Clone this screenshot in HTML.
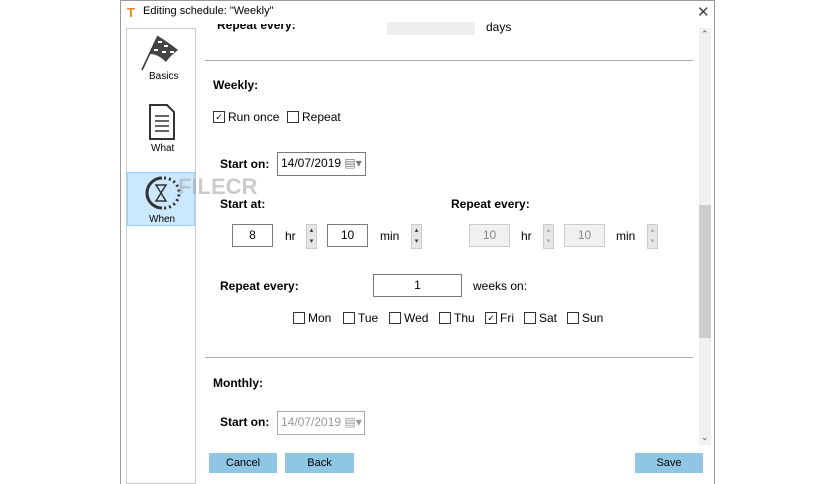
<!DOCTYPE html>
<html><head><style>
body{margin:0;width:836px;height:484px;background:#fff;position:relative;overflow:hidden;font-family:"Liberation Sans",sans-serif;font-size:12px;color:#000}
.a{position:absolute}
.b{font-weight:bold}
.inp{position:absolute;border:1px solid #7a7a7a;background:#fff;text-align:center;box-sizing:border-box;line-height:21px}
.dis{border-color:#ccc;background:#f0f0f0;color:#888}
.sp{position:absolute;width:11px;height:25px;background:#e6e6e6;border:1px solid #ccc;box-sizing:border-box;font-size:7px;line-height:11px;text-align:center;color:#333}
.cb{display:inline-block;width:10px;height:10px;border:1px solid #333;vertical-align:middle;margin-right:3px;font-size:9px;line-height:10px;text-align:center;overflow:hidden;position:relative;top:-1px}
.btn{position:absolute;background:#8fc6e3;height:20px;line-height:20px;text-align:center;font-size:11px}
</style></head><body>
<div class="a" style="left:120px;top:0;width:595px;height:484px;border:1px solid #9a9a9a;border-bottom:none;box-sizing:border-box"></div>
<div class="a" style="left:127px;top:5px;color:#e88a1a;font-weight:bold;font-size:13px">T</div>
<div class="a" style="left:143px;top:5px;font-size:11px">Editing schedule: "Weekly"</div>
<div class="a" style="left:697px;top:3px;font-size:15px;color:#444">✕</div>
<div class="a" style="left:126px;top:28px;width:70px;height:456px;border:1px solid #ccc;box-sizing:border-box"></div>
<svg class="a" style="left:140px;top:32px" width="42" height="40"><path d="M2 38 L18 4" stroke="#333" stroke-width="1.5"/><path d="M18 4 Q28 10 38 18 Q30 24 26 30 Q18 22 10 22 Z" fill="#444"/><path d="M18 10h4M24 14h4M14 18h4M22 20h4M30 20h4" stroke="#fff" stroke-width="2"/></svg>
<div class="a" style="left:149px;top:71px;font-size:10px">Basics</div>
<svg class="a" style="left:148px;top:103px" width="28" height="38"><path d="M2 2h17l7 7v27H2z" fill="#fff" stroke="#333" stroke-width="2"/><path d="M7 13h14M7 18h14M7 23h14M7 28h14" stroke="#333" stroke-width="1.5"/></svg>
<div class="a" style="left:151px;top:143px;font-size:10px">What</div>
<div class="a" style="left:127px;top:172px;width:68px;height:54px;background:#cce8ff;border:1px solid #99d1ff;box-sizing:border-box"></div>
<svg class="a" style="left:142px;top:174px" width="40" height="38"><path d="M20 4 A15 15 0 1 0 20 34" fill="none" stroke="#333" stroke-width="3"/><path d="M22 4 A15 15 0 0 1 22 34" fill="none" stroke="#333" stroke-width="3" stroke-dasharray="2 3"/><path d="M14 11h10l-5 8 5 8H14l5-8z" fill="none" stroke="#333" stroke-width="1.5"/></svg>
<div class="a" style="left:149px;top:214px;font-size:10px">When</div>
<div class="a" style="left:178px;top:174px;font-size:22px;font-weight:bold;color:#aaa;opacity:.6">FILECR</div>
<div class="a b" style="left:217px;top:18px;clip-path:inset(6px 0 0 0)">Repeat every:</div>
<div class="a" style="left:387px;top:22px;width:88px;height:13px;background:#eee"></div>
<div class="a" style="left:486px;top:20px">days</div>
<div class="a" style="left:205px;top:60px;width:488px;height:1px;background:#aaa"></div>
<div class="a b" style="left:213px;top:78px">Weekly:</div>
<div class="a" style="left:213px;top:110px"><span class="cb">✓</span>Run once</div>
<div class="a" style="left:287px;top:110px"><span class="cb"></span>Repeat</div>
<div class="a b" style="left:220px;top:157px">Start on:</div>
<div class="inp" style="left:277px;top:152px;width:89px;height:24px;text-align:left;padding-left:3px">14/07/2019 <span style="color:#777">▤▾</span></div>
<div class="a b" style="left:220px;top:197px">Start at:</div>
<div class="a b" style="left:451px;top:197px">Repeat every:</div>
<div class="inp" style="left:232px;top:224px;width:41px;height:23px">8</div>
<div class="a" style="left:285px;top:229px">hr</div>
<div class="sp" style="left:306px;top:224px">▴<br>▾</div>
<div class="inp" style="left:327px;top:224px;width:41px;height:23px">10</div>
<div class="a" style="left:380px;top:229px">min</div>
<div class="sp" style="left:411px;top:224px">▴<br>▾</div>
<div class="inp dis" style="left:469px;top:224px;width:41px;height:23px">10</div>
<div class="a" style="left:521px;top:229px">hr</div>
<div class="sp" style="left:543px;top:224px;color:#aaa">▴<br>▾</div>
<div class="inp dis" style="left:564px;top:224px;width:41px;height:23px">10</div>
<div class="a" style="left:616px;top:229px">min</div>
<div class="sp" style="left:647px;top:224px;color:#aaa">▴<br>▾</div>
<div class="a b" style="left:220px;top:279px">Repeat every:</div>
<div class="inp" style="left:373px;top:274px;width:89px;height:23px">1</div>
<div class="a" style="left:473px;top:279px">weeks on:</div>
<div class="a" style="left:293px;top:311px"><span class="cb"></span>Mon</div>
<div class="a" style="left:343px;top:311px"><span class="cb"></span>Tue</div>
<div class="a" style="left:389px;top:311px"><span class="cb"></span>Wed</div>
<div class="a" style="left:439px;top:311px"><span class="cb"></span>Thu</div>
<div class="a" style="left:485px;top:311px"><span class="cb">✓</span>Fri</div>
<div class="a" style="left:524px;top:311px"><span class="cb"></span>Sat</div>
<div class="a" style="left:567px;top:311px"><span class="cb"></span>Sun</div>
<div class="a" style="left:205px;top:357px;width:488px;height:1px;background:#aaa"></div>
<div class="a b" style="left:213px;top:376px">Monthly:</div>
<div class="a b" style="left:220px;top:415px">Start on:</div>
<div class="inp" style="left:277px;top:411px;width:88px;height:24px;text-align:left;padding-left:3px;color:#999;border-color:#aaa">14/07/2019 <span>▤▾</span></div>
<div class="a" style="left:699px;top:28px;width:12px;height:417px;background:#f0f0f0"></div>
<div class="a" style="left:699px;top:205px;width:12px;height:133px;background:#cdcdcd"></div>
<div class="a" style="left:701px;top:29px;font-size:9px;color:#555">⌃</div>
<div class="a" style="left:701px;top:432px;font-size:9px;color:#555">⌄</div>
<div class="btn" style="left:209px;top:453px;width:68px">Cancel</div>
<div class="btn" style="left:285px;top:453px;width:69px">Back</div>
<div class="btn" style="left:635px;top:453px;width:68px">Save</div>
</body></html>
